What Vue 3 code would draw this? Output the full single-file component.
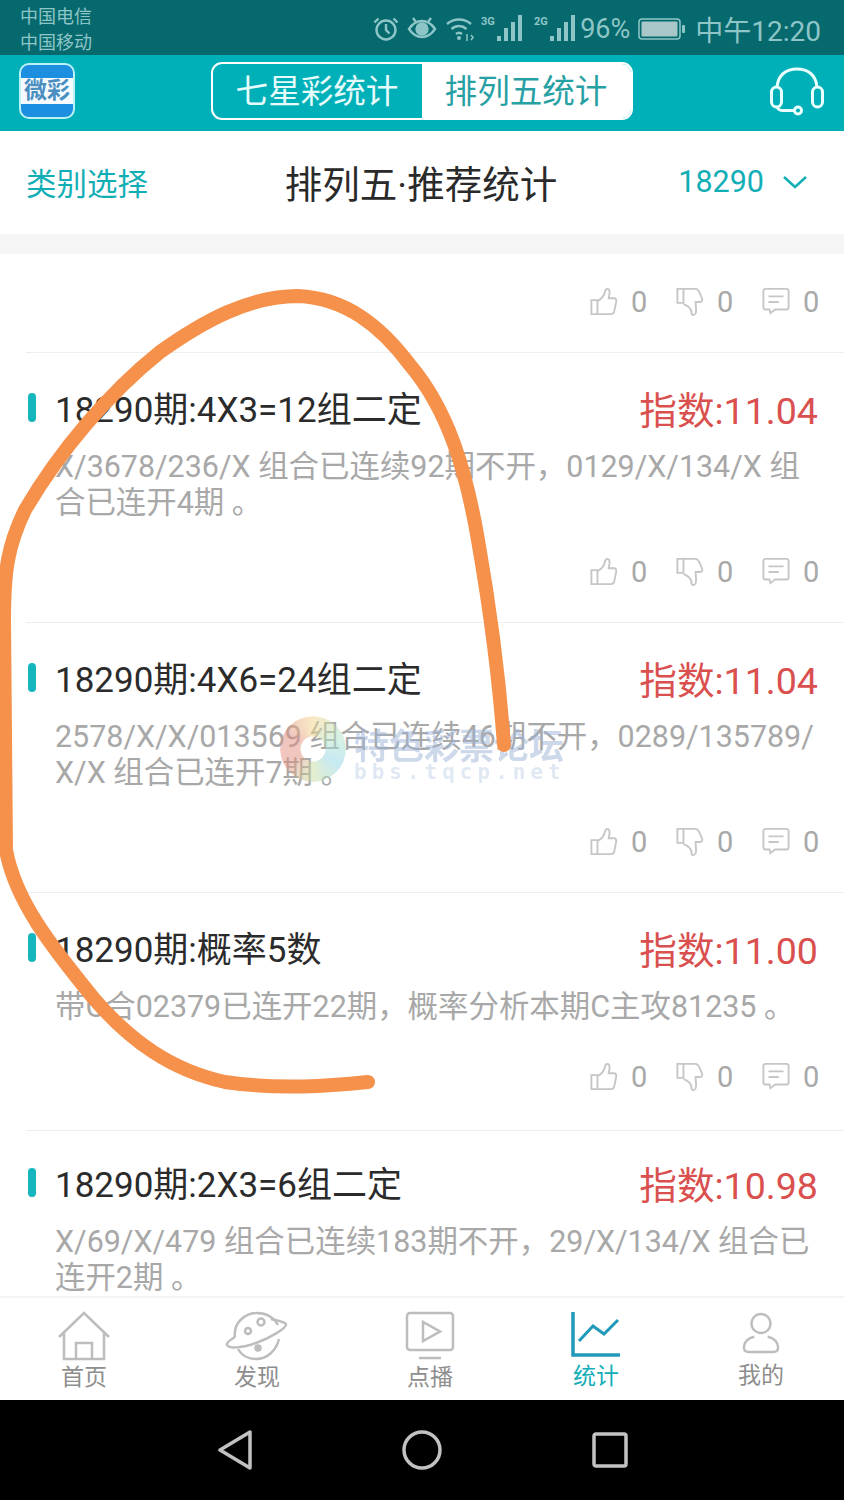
<script setup>
const items = [
  { title: '18290期:4X3=12组二定', score: '指数:11.04', desc: 'X/3678/236/X 组合已连续92期不开，0129/X/134/X 组合已连开4期 。', cls: 'two' },
  { title: '18290期:4X6=24组二定', score: '指数:11.04', desc: '2578/X/X/013569 组合已连续46期不开，0289/135789/X/X 组合已连开7期 。', cls: 'two' },
  { title: '18290期:概率5数', score: '指数:11.00', desc: '带C合02379已连开22期，概率分析本期C主攻81235 。', cls: 'one' },
]
const tabs = [
  { label: '首页', key: 'home' },
  { label: '发现', key: 'planet' },
  { label: '点播', key: 'play' },
  { label: '统计', key: 'chart', active: true },
  { label: '我的', key: 'me' },
]
</script>

<template>
  <div class="screen">
    <div class="status">
      <div class="carrier"><span>中国电信</span><span>中国移动</span></div>
      <div class="status-right">
        <svg class="si s1" width="28" height="28" viewBox="0 0 28 28" fill="none" stroke="#8ec6c8" stroke-width="2.4"><circle cx="14" cy="15" r="9.5"/><path d="M14 9v6l3.500 3.500M2.500 7.500 6.500 3.500M25.500 7.500 21.500 3.500"/></svg>
        <svg class="si s2" width="30" height="28" viewBox="0 0 30 28" fill="none" stroke="#8ec6c8" stroke-width="2.4"><path d="M2 14c4-6 8-8 13-8s9 2 13 8c-4 6-8 8-13 8S6 20 2 14Z"/><circle cx="15" cy="14" r="5.500" fill="#8ec6c8"/><path d="M6 3l3 4M24 3l-3 4"/></svg>
        <svg class="si s3" width="30" height="28" viewBox="0 0 30 28" fill="none" stroke="#8ec6c8" stroke-width="2.400"><path d="M2 9c7-6 17-6 24 0M6.500 14c4.500-4 10.500-4 15 0M11 19c2-1.600 4-1.600 6 0"/><circle cx="14" cy="23" r="2" fill="#8ec6c8" stroke="none"/><path d="M22 19v7M26 20l2 2.500-2 2.500" stroke-width="1.500"/></svg>
        <svg class="si s4" width="42" height="28" viewBox="0 0 42 28" fill="#8ec6c8"><text x="0" y="10" font-size="11" font-family="Roboto, sans-serif" font-weight="700">3G</text><rect x="16" y="21" width="4" height="5"/><rect x="23" y="13" width="4" height="13"/><rect x="30" y="7" width="4" height="19"/><rect x="37" y="0" width="4" height="26"/></svg>
        <svg class="si s5" width="42" height="28" viewBox="0 0 42 28" fill="#8ec6c8"><text x="0" y="10" font-size="11" font-family="Roboto, sans-serif" font-weight="700">2G</text><rect x="16" y="21" width="4" height="5"/><rect x="23" y="13" width="4" height="13"/><rect x="30" y="7" width="4" height="19"/><rect x="37" y="0" width="4" height="26"/></svg>
        <span class="pct">96%</span>
        <svg class="si batt" width="48" height="24" viewBox="0 0 48 24"><rect x="1" y="2" width="41" height="20" rx="3" fill="#056a6e" stroke="#8ec6c8" stroke-width="1.500"/><rect x="3.500" y="4.500" width="36" height="15" rx="1" fill="#a9c6c8"/><rect x="44" y="8" width="3" height="8" rx="1" fill="#8ec6c8"/></svg>
        <span class="clock">中午12:20</span>
      </div>
    </div>

    <header class="header">
      <div class="logo">
        <div class="logo-mid">微彩</div>
      </div>
      <div class="segment">
        <div class="seg">七星彩统计</div>
        <div class="seg on">排列五统计</div>
      </div>
      <svg class="headset" width="56" height="56" viewBox="0 0 56 56" fill="none" stroke="#eaffff" stroke-width="3">
        <path d="M8 22C9 10 17 4 28 4s19 6 20 18"/>
        <rect x="2.500" y="22" width="10" height="20" rx="5"/>
        <rect x="43.500" y="22" width="10" height="20" rx="5"/>
        <path d="M8 42c1 2.500 3 3.500 6 3.500h11"/>
        <circle cx="29" cy="45.500" r="3.500"/>
      </svg>
    </header>

    <section class="filter">
      <span class="f-left">类别选择</span>
      <span class="f-title">排列五·推荐统计</span>
      <span class="f-right">18290
        <svg width="26" height="16" viewBox="0 0 26 16" fill="none" stroke="#12aeb6" stroke-width="2.500"><path d="M2 3l11 10L24 3"/></svg>
      </span>
    </section>

    <main class="list">
      <div class="actions first">
        <template v-for="n in ['up','down','msg']" :key="n">
          <svg v-if="n==='up'" class="ai" viewBox="0 0 30 32" fill="none" stroke="#c6c6c6" stroke-width="2"><path d="M1.500 14h6.500v15H1.500zM8 15c4-2 7-5 8-10 .400-2 1-3 2.500-3s2.500 2 2.500 4-1 5-1 6h6c2 0 2.500 2 2 4l-2 10c-.400 2-2 3-4 3H8"/></svg>
          <svg v-else-if="n==='down'" class="ai" viewBox="0 0 30 32" fill="none" stroke="#c6c6c6" stroke-width="2"><path d="M1.500 2h6.500v15H1.500zM8 2h13c2 0 3 1.500 4 3.500l3 7c.600 2-.500 3.500-2 3.500h-5c0 3 .500 6 .500 9 0 3-1.500 5-3 5s-2-1.500-2-3c0-4-4-7-8.500-9"/></svg>
          <svg v-else class="ai" viewBox="0 0 30 32" fill="none" stroke="#c6c6c6" stroke-width="2"><path d="M4 2h22c1.500 0 2.500 1 2.500 2.500v17c0 1.500-1 2.500-2.500 2.500H14l-5 4-1-4H4c-1.500 0-2.500-1-2.500-2.500v-17C1.500 3 2.500 2 4 2Z"/><path d="M7 10h16M7 16h11"/></svg>
          <span class="cnt">0</span>
        </template>
      </div>

      <article v-for="(it, i) in items" :key="i" class="item" :class="it.cls">
        <div class="head">
          <i class="mark"></i>
          <span class="title">{{ it.title }}</span>
          <span class="score">{{ it.score }}</span>
        </div>
        <p class="desc">{{ it.desc }}</p>
        <div class="actions">
          <template v-for="n in ['up','down','msg']" :key="n">
            <svg v-if="n==='up'" class="ai" viewBox="0 0 30 32" fill="none" stroke="#c6c6c6" stroke-width="2"><path d="M1.500 14h6.500v15H1.500zM8 15c4-2 7-5 8-10 .400-2 1-3 2.500-3s2.500 2 2.500 4-1 5-1 6h6c2 0 2.500 2 2 4l-2 10c-.400 2-2 3-4 3H8"/></svg>
            <svg v-else-if="n==='down'" class="ai" viewBox="0 0 30 32" fill="none" stroke="#c6c6c6" stroke-width="2"><path d="M1.500 2h6.500v15H1.500zM8 2h13c2 0 3 1.500 4 3.500l3 7c.600 2-.500 3.500-2 3.500h-5c0 3 .500 6 .500 9 0 3-1.500 5-3 5s-2-1.500-2-3c0-4-4-7-8.500-9"/></svg>
            <svg v-else class="ai" viewBox="0 0 30 32" fill="none" stroke="#c6c6c6" stroke-width="2"><path d="M4 2h22c1.500 0 2.500 1 2.500 2.500v17c0 1.500-1 2.500-2.500 2.500H14l-5 4-1-4H4c-1.500 0-2.500-1-2.500-2.500v-17C1.500 3 2.500 2 4 2Z"/><path d="M7 10h16M7 16h11"/></svg>
            <span class="cnt">0</span>
          </template>
        </div>
      </article>

      <article class="item last">
        <div class="head">
          <i class="mark"></i>
          <span class="title">18290期:2X3=6组二定</span>
          <span class="score">指数:10.98</span>
        </div>
        <p class="desc">X/69/X/479 组合已连续183期不开，29/X/134/X 组合已连开2期 。</p>
      </article>
    </main>

    <nav class="tabs">
      <div v-for="t in tabs" :key="t.key" class="tab" :class="[t.key, { active: t.active }]">
        <svg v-if="t.key==='home'" width="54" height="50" viewBox="0 0 54 50" fill="none" stroke="#bdbdbd" stroke-width="2.500"><path d="M2 26 27 2l25 24M7 22v26h40V22M19 48V32h16v16"/></svg>
        <svg v-else-if="t.key==='planet'" width="64" height="50" viewBox="0 0 64 50" fill="none" stroke="#bdbdbd" stroke-width="2.500"><path d="M10 26C8 12 20 2 32 2c10 0 17 5 21 12M54 28c-3 12-12 20-23 20-8 0-14-3-18-10"/><path d="M46 8c8 2 14 3 15 5 1 4-16 14-30 19S4 38 2 34c-1-2 3-5 8-8"/><circle cx="23" cy="20" r="3"/><circle cx="36" cy="11" r="3.500"/><circle cx="33" cy="37" r="2.500" fill="#bdbdbd"/></svg>
        <svg v-else-if="t.key==='play'" width="50" height="50" viewBox="0 0 50 50" fill="none" stroke="#bdbdbd" stroke-width="2.500"><rect x="2" y="2" width="46" height="37" rx="3"/><path d="M18 11v19l17-9.500ZM14 47h22"/></svg>
        <svg v-else-if="t.key==='chart'" width="50" height="48" viewBox="0 0 50 48" fill="none" stroke="#1f9abb" stroke-width="3"><path d="M2 1v43h47" stroke-width="3.500"/><path d="M8 30l14-15 11 8L47 9"/></svg>
        <svg v-else width="38" height="44" viewBox="0 0 40 44" fill="none" stroke="#bdbdbd" stroke-width="2.500"><circle cx="20" cy="12" r="10"/><path d="M13 26C6 27 2 32 2 37c0 3 2 5 5 5h26c3 0 5-2 5-5 0-5-4-10-11-11"/></svg>
        <span>{{ t.label }}</span>
      </div>
    </nav>

    <footer class="nav">
      <svg width="36" height="40" viewBox="0 0 36 40" fill="none" stroke="#c2c2c2" stroke-width="3.500" stroke-linejoin="round"><path d="M33 2v36L3 20Z"/></svg>
      <svg width="40" height="40" viewBox="0 0 40 40" fill="none" stroke="#c2c2c2" stroke-width="3.500"><circle cx="20" cy="20" r="18"/></svg>
      <svg width="36" height="36" viewBox="0 0 36 36" fill="none" stroke="#c2c2c2" stroke-width="3.500"><rect x="2" y="2" width="32" height="32" rx="2"/></svg>
    </footer>

    <div class="watermark" aria-hidden="true">
      <div class="swirl"></div>
      <div class="wm-text"><span class="wm-a">特色彩票论坛</span><span class="wm-b">bbs.tqcp.net</span></div>
    </div>

    <svg class="scribble" width="844" height="1500" viewBox="0 0 844 1500" fill="none" aria-hidden="true">
      <path d="M504 745C500 690 492 620 478 540C466 470 448 410 410 365C380 325 345 298 298 296C250 296 205 320 160 352C110 392 60 450 25 510C8 545 4 570 4 620C4 700 5 780 6 850C15 900 50 945 95 1000C130 1040 170 1070 225 1082C280 1090 330 1086 368 1082" stroke="#f5914b" stroke-width="14" stroke-linecap="round" stroke-linejoin="round"/>
    </svg>
  </div>
</template>

<style>
html, body { margin: 0; background: #fff; }
</style>

<style scoped>
.screen {
  position: relative;
  width: 844px;
  height: 1500px;
  overflow: hidden;
  display: flex;
  flex-direction: column;
  background: #fff;
  font-family: Roboto, "Noto Sans CJK SC", sans-serif;
}
.status {
  height: 55px;
  flex: none;
  background: #05696d;
  display: flex;
  align-items: center;
  justify-content: space-between;
  padding: 0 23px 0 20px;
  color: #8ec6c8;
}
.carrier { display: flex; flex-direction: column; font-size: 18px; line-height: 26px; margin-top: 4px; }
.status-right { display: flex; align-items: center; margin-top: 2px; }
.si { flex: none; }
.s1 { margin-right: 7px; }
.s2 { margin-right: 8px; }
.s3 { margin-right: 6px; }
.s4 { margin-right: 11px; }
.s5 { margin-right: 4px; }
.pct { font-size: 27px; margin-right: 8px; }
.batt { margin-right: 9px; }
.clock { font-size: 28px; white-space: nowrap; }

.header {
  height: 76px;
  flex: none;
  background: #00b0b8;
  display: flex;
  align-items: center;
  justify-content: space-between;
  padding: 0 19px 0 19px;
}
.logo {
  width: 56px;
  height: 56px;
  box-sizing: border-box;
  border: 2px solid #b9f2f5;
  border-radius: 10px;
  background: #1d8fe0;
  display: flex;
  align-items: center;
  margin-top: -4px;
}
.logo-mid {
  width: 100%;
  height: 26px;
  background: #f6fbff;
  color: #4a8fc0;
  font-size: 23px;
  line-height: 26px;
  text-align: center;
  font-weight: 700;
  white-space: nowrap;
}
.segment {
  display: flex;
  width: 422px;
  height: 58px;
  box-sizing: border-box;
  border: 2.500px solid #fff;
  border-radius: 11px;
  overflow: hidden;
  margin: -4px 0 0 -1px;
}
.seg {
  flex: 1;
  color: #e6fbfb;
  font-size: 32.600px;
  line-height: 57px;
  text-align: center;
  white-space: nowrap;
}
.seg.on { background: #fff; color: #27a0a4; }
.headset { flex: none; }

.filter {
  height: 103px;
  flex: none;
  display: flex;
  align-items: center;
  justify-content: space-between;
  padding: 0 36px 2px 26px;
  box-sizing: border-box;
}
.f-left { color: #12aeb6; font-size: 30.500px; width: 190px; white-space: nowrap; }
.f-title { color: #2a2a2a; font-size: 37.500px; margin-left: -52px; white-space: nowrap; }
.f-right { color: #12aeb6; font-size: 30.500px; display: flex; align-items: center; gap: 18px; width: 130px; white-space: nowrap; justify-content: flex-end; }

.list {
  flex: 1;
  min-height: 0;
  overflow: hidden;
  border-top: 20px solid #f5f5f5;
}
.actions {
  display: flex;
  align-items: center;
  justify-content: flex-end;
  height: 32px;
}
.actions.first { margin: 32px 25px 34px 0; }
.ai { flex: none; width: 28px; height: 30px; }
.cnt { color: #a8a8a8; font-size: 29px; margin-left: 13px; width: 16px; }
.cnt:not(:last-child) { margin-right: 29px; }

.item {
  margin: 0 0 0 26px;
  border-top: 1px solid #eeeeee;
  padding-right: 26px;
}
.item.two { height: 269px; }
.item.one { height: 237px; }
.head {
  display: flex;
  align-items: center;
  height: 44px;
  padding-top: 31px;
}
.item.last .head { padding-top: 28px; }
.mark {
  width: 8px;
  height: 29px;
  border-radius: 4px;
  background: #15b6bd;
  flex: none;
  margin: 2px 19px 0 2px;
}
.title { color: #2b2b2b; font-size: 35px; flex: 1; white-space: nowrap; }
.score { color: #d9504f; font-size: 37.600px; white-space: nowrap; margin-top: 2px; }
.desc {
  margin: 21px 0 0 29px;
  color: #a8a8a8;
  font-size: 30.450px;
  line-height: 36px;
  word-break: break-all;
}
.item .actions { margin-right: -1px; }
.item.two .actions { margin-top: 35px; }
.item.one .actions { margin-top: 36px; }
.item.two .desc, .item.last .desc { min-height: 72px; }
.item.one .desc { min-height: 36px; }

.tabs {
  height: 104px;
  flex: none;
  box-sizing: border-box;
  border-top: 2px solid #f3f3f3;
  background: #fff;
  display: grid;
  grid-template-columns: 168px 178px 168px 164px 166px;
}
.tab {
  display: flex;
  flex-direction: column;
  align-items: center;
  justify-content: flex-start;
  padding-top: 13px;
  color: #8e8e8e;
  font-size: 23px;
  line-height: 27px;
}
.tab span { margin-top: 3px; }
.tab.me span { margin-top: 7px; }
.tab.chart span { margin-top: 4px; }
.tab.active { color: #13aeb8; }

.nav {
  height: 100px;
  flex: none;
  background: #000;
  display: grid;
  grid-template-columns: 1fr 1fr 1fr;
  padding: 0 140px 0 141px;
  align-items: center;
  justify-items: center;
}

.watermark {
  position: absolute;
  left: 280px;
  top: 716px;
  display: flex;
  align-items: flex-start;
  opacity: .5;
  pointer-events: none;
}
.swirl {
  width: 66px;
  height: 66px;
  flex: none;
  border-radius: 50%;
  background: conic-gradient(#f4d58a, #b7e6c5, #8fd5e8, #c9dfa0, #e48e80, #e48e80, #f4d58a);
  -webkit-mask: radial-gradient(circle, transparent 12px, #000 13px);
  mask: radial-gradient(circle, transparent 12px, #000 13px);
}
.wm-text { display: flex; flex-direction: column; margin: 14px 0 0 8px; line-height: 1; white-space: nowrap; }
.wm-a { font-size: 35px; font-weight: 700; color: #9db4d6; }
.wm-b { font-size: 21px; font-family: "DejaVu Sans Mono", monospace; color: #c3d3e8; letter-spacing: 5px; font-weight: 700; margin-top: -3px; }

.scribble { position: absolute; left: 0; top: 0; pointer-events: none; }
</style>
